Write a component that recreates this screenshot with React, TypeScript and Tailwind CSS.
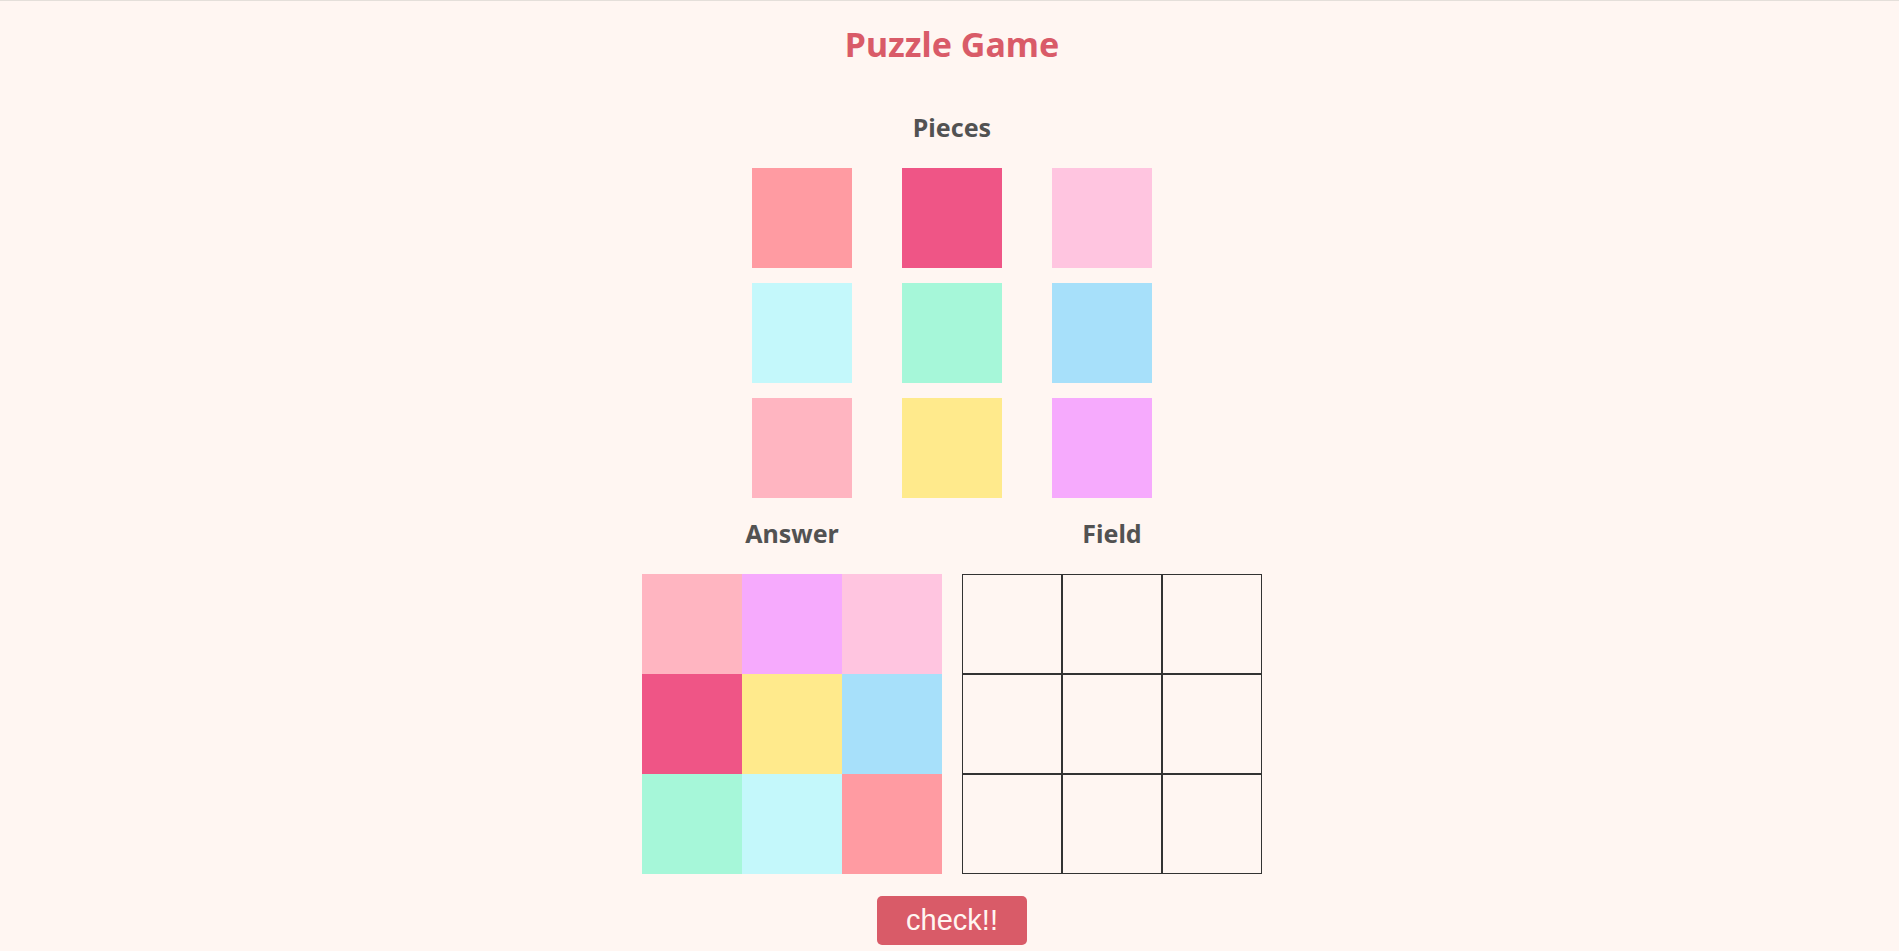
import React from "react";

type Piece = { id: number; color: string };

const pieces: Piece[] = [
  { id: 1, color: "bg-[#ff9ba2]" },
  { id: 2, color: "bg-[#ef5586]" },
  { id: 3, color: "bg-[#ffc5e0]" },
  { id: 4, color: "bg-[#c4f8fb]" },
  { id: 5, color: "bg-[#a6f7d9]" },
  { id: 6, color: "bg-[#a7e0fa]" },
  { id: 7, color: "bg-[#ffb5c1]" },
  { id: 8, color: "bg-[#ffea8c]" },
  { id: 9, color: "bg-[#f6aafd]" },
];

// Target arrangement shown in the Answer board (by piece id)
const answer = [7, 9, 3, 2, 8, 6, 5, 4, 1];

const colorOf = (id: number) => pieces.find((p) => p.id === id)!.color;

export default function App() {
  return (
    <div
      className="min-h-[951px] w-full border-t border-[#e4dfda] bg-[#fff6f2] pl-[5px]"
      style={{ fontFamily: '"Noto Sans", "Open Sans", sans-serif' }}
    >
      <h1 className="mt-[26px] text-center text-[34px] font-bold leading-none text-[#d95b68]">
        Puzzle Game
      </h1>

      <h2 className="mt-[54px] text-center text-[25px] font-bold leading-none text-[#525252]">
        Pieces
      </h2>

      <div className="mx-auto mt-[28px] grid w-[400px] grid-cols-[100px_100px_100px] gap-x-[50px] gap-y-[15px]">
        {pieces.map((p) => (
          <div key={p.id} className={`h-[100px] w-[100px] ${p.color}`} />
        ))}
      </div>

      <div className="mt-[23px] flex justify-center gap-[20px]">
        <div className="flex w-[300px] flex-col">
          <h2 className="text-center text-[25px] font-bold leading-none text-[#525252]">Answer</h2>
          <div className="mt-[28px] grid grid-cols-[100px_100px_100px]">
            {answer.map((id, i) => (
              <div key={i} className={`h-[100px] w-[100px] ${colorOf(id)}`} />
            ))}
          </div>
        </div>
        <div className="flex w-[300px] flex-col">
          <h2 className="text-center text-[25px] font-bold leading-none text-[#525252]">Field</h2>
          <div className="mt-[28px] grid grid-cols-[100px_100px_100px]">
            {Array.from({ length: 9 }).map((_, i) => (
              <div key={i} className="box-border h-[100px] w-[100px] border border-[#333333]" />
            ))}
          </div>
        </div>
      </div>

      <div className="mt-[22px] flex justify-center">
        <button
          type="button"
          className="flex h-[49px] w-[150px] items-center justify-center rounded-[5px] bg-[#d95b68] text-[29px] leading-none text-[#fff6f2]"
          style={{ fontFamily: '"Liberation Sans", Arial, sans-serif' }}
        >
          check!!
        </button>
      </div>
    </div>
  );
}
